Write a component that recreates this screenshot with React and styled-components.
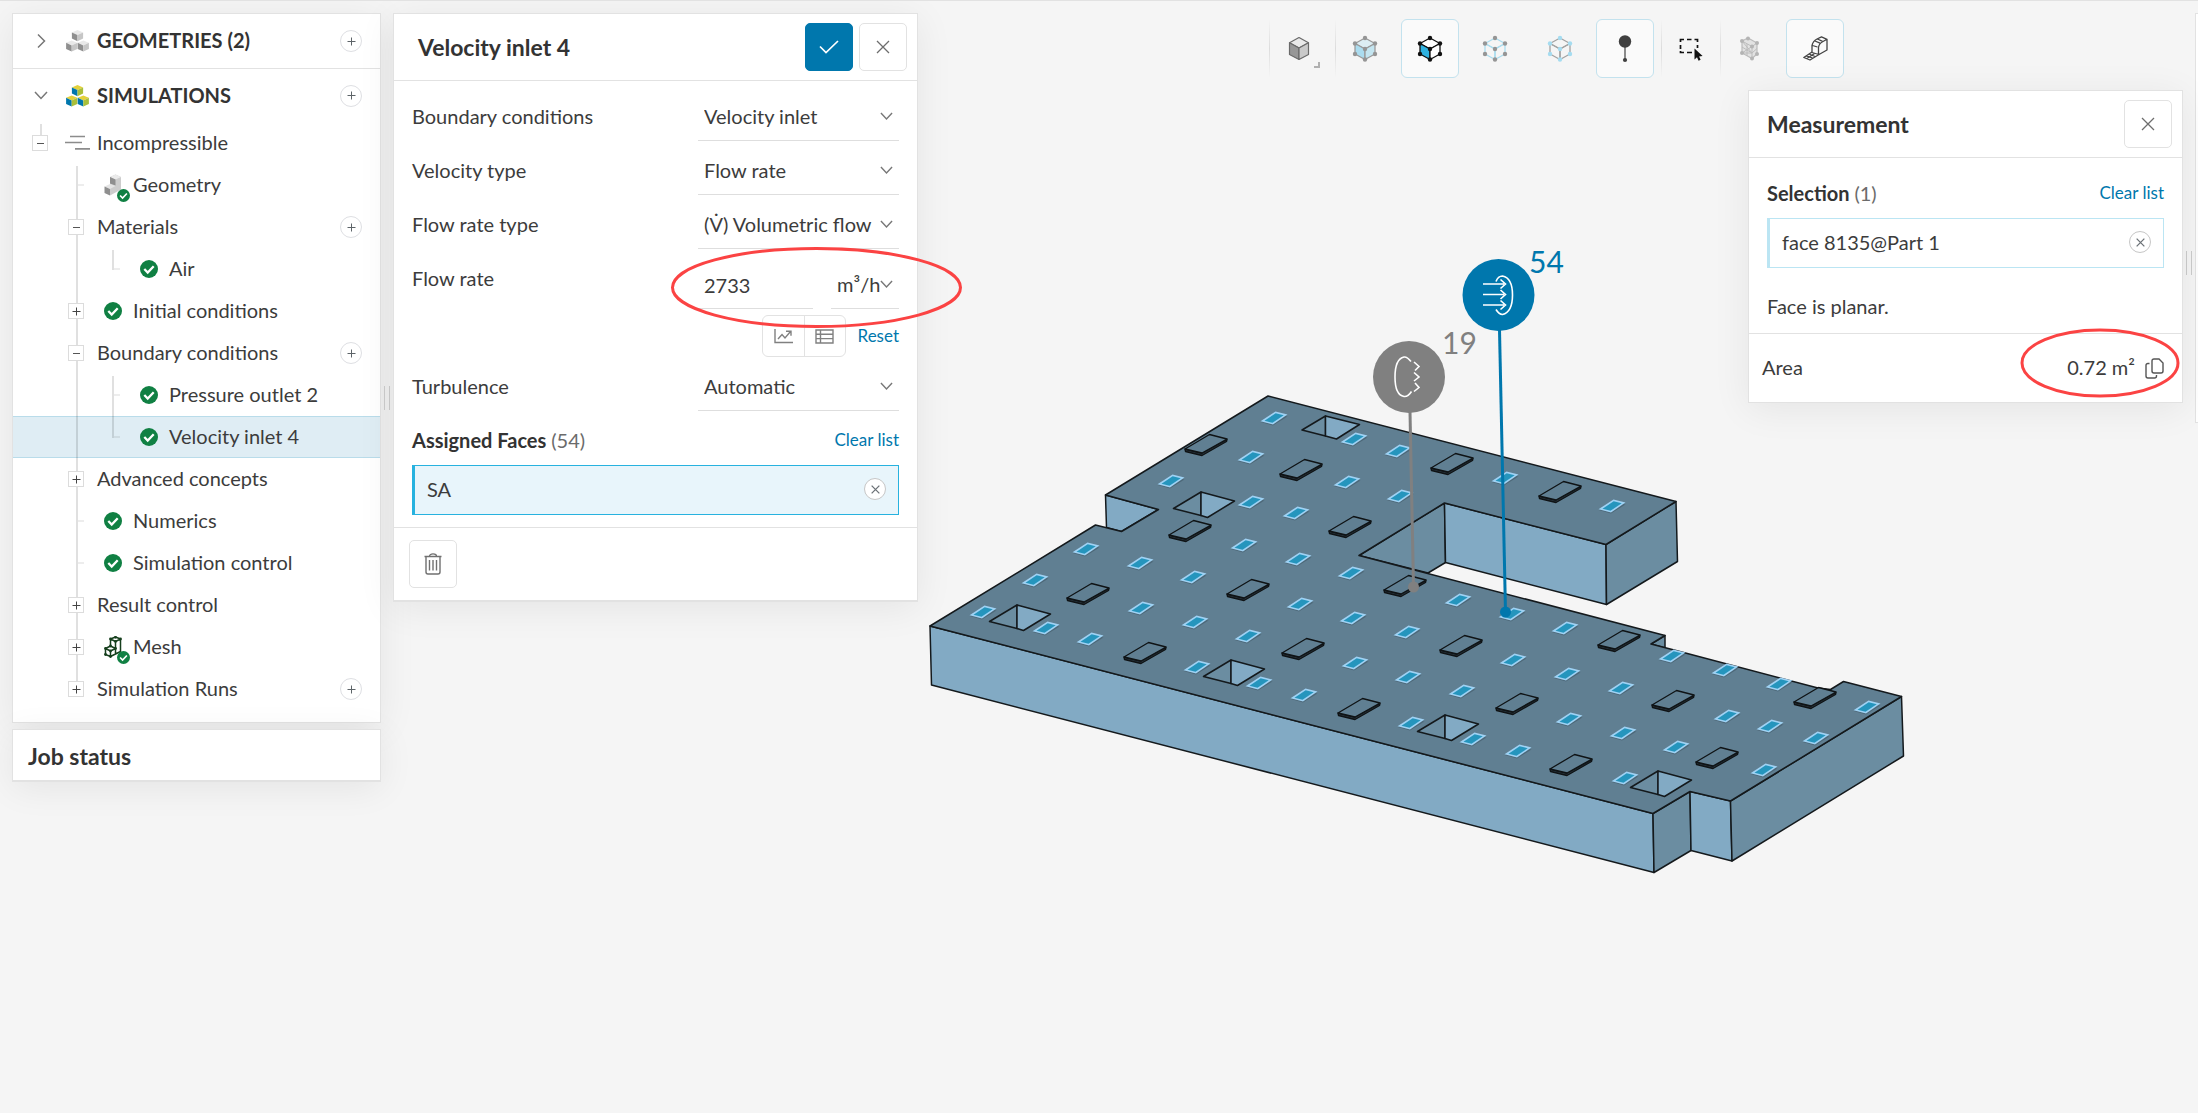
import React from "react";
import styled, { createGlobalStyle, css } from "styled-components";

const GlobalStyle = createGlobalStyle`
  *, *::before, *::after { box-sizing: border-box; }
  body {
    margin: 0;
    background: #f5f5f5;
    color: #3c3c3c;
    font-family: Lato, "Open Sans", sans-serif;
    font-size: 20px;
    line-height: 24px;
  }
  button, input, select { font: inherit; color: inherit; margin: 0; }
  button { cursor: pointer; padding: 0; }
  h1, h2, h3, p, ul { margin: 0; padding: 0; }
  ul { list-style: none; }
  svg { display: block; }
`;

/* ---------- layout ---------- */

const Workspace = styled.div`
  display: flex;
  min-height: 100vh;
  padding: 12px 0 0 12px;
  border-top: 1px solid #e2e2e2;
  overflow: hidden;
`;

const Sidebar = styled.nav`
  flex: none;
  width: 369px;
  display: flex;
  flex-direction: column;
  gap: 6px;
`;

const Panel = styled.section`
  background: #fff;
  border: 1px solid #e2e2e2;
  box-shadow: 0 6px 36px rgba(0, 0, 0, 0.07);
`;

const TreePanel = styled(Panel)`
  padding-bottom: 12px;
`;

const JobPanel = styled(Panel)`
  padding: 14px 15px 12px;
  border-bottom-width: 2px;
`;

const SettingsPanel = styled(Panel)`
  position: relative;
  z-index: 2;
  flex: none;
  align-self: flex-start;
  width: 525px;
  border-bottom-width: 2px;
`;

const Viewer = styled.main`
  position: relative;
  flex: 1;
  min-width: 0;
  display: flex;
  flex-direction: column;
`;

const MeasureDock = styled.div`
  position: relative;
  display: flex;
  justify-content: flex-end;
  margin-top: 12px;
`;

const MeasurePanel = styled(Panel)`
  width: 435px;
`;

const EdgePanel = styled.div`
  flex: none;
  width: 3px;
  height: 410px;
  background: #fff;
  border: 1px solid #e2e2e2;
  border-right: 0;
`;

const Grip = styled.div`
  flex: none;
  width: 12px;
  display: flex;
  justify-content: center;
  padding-top: ${(p) => p.$top}px;
  &::before {
    content: "";
    width: 6px;
    height: 24px;
    border: solid #cbcbcb;
    border-width: 0 1px;
  }
`;

/* ---------- text ---------- */

const Title = styled.h2`
  font-size: 23px;
  line-height: 28px;
  font-weight: 700;
  color: #333;
`;

const JobTitle = styled(Title)`
  line-height: 24px;
`;

const TextLink = styled.a`
  font-size: 17px;
  color: #0077ad;
  text-decoration: none;
`;

/* ---------- tree ---------- */

const TreeHead = styled.div`
  display: flex;
  align-items: center;
  height: ${(p) => (p.$divided ? 55 : 53)}px;
  padding: 0 18px 0 10px;
  border-bottom: ${(p) => (p.$divided ? "1px solid #e2e2e2" : "0")};
`;

const TreeRow = styled.li`
  display: flex;
  align-items: center;
  height: 42px;
  padding: 0 18px 0 10px;
  ${(p) =>
    p.$selected &&
    css`
      background: #dfedf4;
      box-shadow: inset 0 1px #b9dcea, inset 0 -1px #b9dcea;
    `}
`;

const Label = styled.span`
  flex: 1;
  padding: 0 0 2px 2px;
  white-space: nowrap;
  font-weight: ${(p) => (p.$strong ? 700 : 400)};
  color: ${(p) => (p.$strong ? "#333" : "#3c3c3c")};
`;

const Slot = styled.span`
  flex: none;
  position: relative;
  width: 36px;
  height: 100%;
  display: flex;
  align-items: center;
  justify-content: center;
`;

const lineSpan = {
  all: "top: 0; bottom: 0;",
  first: "top: 2px; bottom: 0;",
  upper: "top: 0; height: 22px;",
  stub: "top: 2px; height: 20px;",
};

const Guide = styled(Slot)`
  ${(p) =>
    p.$line &&
    css`
      &::before {
        content: "";
        position: absolute;
        left: 17px;
        width: 2px;
        background: rgba(0, 0, 0, 0.12);
        ${lineSpan[p.$line]}
      }
    `}
  ${(p) =>
    p.$tick &&
    css`
      &::after {
        content: "";
        position: absolute;
        left: 19px;
        top: 20px;
        width: 6px;
        height: 2px;
        background: rgba(0, 0, 0, 0.07);
      }
    `}
`;

const Toggle = styled.button`
  position: relative;
  margin-right: 2px;
  display: grid;
  place-items: center;
  width: 16px;
  height: 16px;
  background: #fff;
  border: 1px solid #dcdcdc;
`;

const Caret = styled.button`
  display: grid;
  place-items: center;
  width: 20px;
  height: 20px;
  background: none;
  border: 0;
`;

const RoundButton = styled.button`
  flex: none;
  display: grid;
  place-items: center;
  width: 22px;
  height: 22px;
  border: 1px solid ${(p) => p.$edge || "#dedfe3"};
  border-radius: 50%;
  background: #fff;
`;

const Badged = styled.span`
  position: relative;
  svg + svg {
    position: absolute;
    left: 13px;
    top: 15px;
  }
`;

/* ---------- forms ---------- */

const PanelHead = styled.header`
  display: flex;
  align-items: center;
  gap: 6px;
  height: 67px;
  padding: 0 10px 0 ${(p) => p.$indent}px;
  border-bottom: 1px solid #e2e2e2;
  ${Title} { flex: 1; }
`;

const SquareButton = styled.button`
  display: grid;
  place-items: center;
  width: 48px;
  height: 48px;
  border: 1px solid ${(p) => (p.$primary ? "#0077ad" : "#e2e2e2")};
  border-radius: 5px;
  background: ${(p) => (p.$primary ? "#0077ad" : "#fff")};
`;

const FormBody = styled.div`
  padding: 9px 18px 12px;
  border-bottom: 1px solid #e2e2e2;
`;

const Field = styled.div`
  position: relative;
  display: flex;
  justify-content: space-between;
  min-height: 54px;
  padding: 3px 0;
`;

const FieldLabel = styled.label`
  line-height: 46px;
`;

const Picker = styled.span`
  display: grid;
  align-items: center;
  width: ${(p) => p.$width}px;
  border-bottom: 1px solid #dedede;
  height: 48px;
  select, svg { grid-area: 1 / 1; }
  select {
    appearance: none;
    width: 100%;
    height: 46px;
    padding: 0 0 2px 6px;
    border: 0;
    outline: 0;
    background: transparent;
  }
  svg {
    justify-self: end;
    margin-right: 6px;
    pointer-events: none;
  }
`;

const ValueArea = styled.div`
  width: 201px;
  padding-top: 6px;
`;

const ValueLine = styled.div`
  display: flex;
  justify-content: space-between;
`;

const ValueInput = styled.input`
  width: 115px;
  height: 48px;
  padding: 0 6px;
  border: 0;
  border-bottom: 1px solid #dedede;
  border-radius: 0;
  outline: 0;
  background: transparent;
`;

const ValueTools = styled.div`
  display: flex;
  justify-content: flex-end;
  align-items: center;
  gap: 12px;
  margin-top: 6px;
`;

const SplitGroup = styled.div`
  display: flex;
  border: 1px solid #e2e2e2;
  border-radius: 6px;
  button {
    display: grid;
    place-items: center;
    width: 41px;
    height: 40px;
    border: 0;
    background: none;
  }
  button + button { border-left: 1px solid #e2e2e2; }
`;

const ListHead = styled.div`
  display: flex;
  align-items: center;
  justify-content: space-between;
  height: ${(p) => p.$height}px;
  h3 { font-size: 20px; line-height: 24px; font-weight: 700; color: #333; }
  h3 span { font-weight: 400; color: #6b6b6b; }
`;

const Chip = styled.div`
  display: flex;
  align-items: center;
  justify-content: space-between;
  height: 50px;
  padding: 0 12px 2px;
  border: 1px solid ${(p) => (p.$active ? "#27b2df" : "#bbe5f3")};
  border-left-width: 3px;
  background: ${(p) => (p.$active ? "#e8f5fb" : "#fff")};
`;

const PanelFoot = styled.footer`
  padding: 12px 15px;
`;

const MeasureBody = styled.div`
  padding: 10px 18px 15px;
  border-bottom: 1px solid #e2e2e2;
  p { margin-top: 26px; }
`;

const AreaRow = styled.div`
  position: relative;
  display: flex;
  align-items: center;
  height: 68px;
  padding: 0 18px 0 13px;
  dt { flex: 1; padding-bottom: 2px; }
  dd { margin: 0 10px 0 0; padding-bottom: 2px; }
  button { border: 0; background: none; }
`;

const AreaList = styled.dl`
  margin: 0;
`;

const Mark = styled.svg`
  position: absolute;
  z-index: 3;
  left: ${(p) => p.$left}px;
  top: ${(p) => p.$top}px;
  pointer-events: none;
  overflow: visible;
`;

/* ---------- toolbar ---------- */

const Toolbar = styled.div`
  position: relative;
  display: flex;
  justify-content: center;
  gap: 7px;
  padding: 6px 0 0 12px;
`;

const ToolGroup = styled.div`
  display: flex;
  gap: 7px;
`;

const ToolSet = styled.div`
  display: flex;
`;

const Divider = styled.i`
  width: 1px;
  margin-right: -7px;
  background: linear-gradient(rgba(0, 0, 0, 0), rgba(0, 0, 0, 0.1), rgba(0, 0, 0, 0));
`;

const Tool = styled.button`
  position: relative;
  display: grid;
  place-items: center;
  width: 58px;
  height: 59px;
  border: 1px solid ${(p) => (p.$on ? "#c3e2ee" : "transparent")};
  border-radius: 6px;
  background: ${(p) => (p.$on ? "#fafafa" : "transparent")};
  ${(p) =>
    p.$menu &&
    css`
      &::after {
        content: "";
        position: absolute;
        right: 7px;
        bottom: 9px;
        width: 6px;
        height: 6px;
        border: solid #b0b0b0;
        border-width: 0 2px 2px 0;
      }
    `}
`;

/* ---------- icons ---------- */

const Plus = ({ size = 9, color = "#5d6468" }) => (
  <svg width={size} height={size} viewBox="0 0 9 9">
    <path d="M4.5 0.5v8M0.5 4.5h8" stroke={color} fill="none" />
  </svg>
);
const Minus = () => (
  <svg width="9" height="9" viewBox="0 0 9 9">
    <path d="M1 4.5h7" stroke="#555" fill="none" />
  </svg>
);
const Cross = ({ size = 14, weight = 1.3, color = "#6d6d6d" }) => (
  <svg width={size} height={size} viewBox="0 0 14 14">
    <path d="M1 1l12 12M13 1L1 13" stroke={color} strokeWidth={weight} fill="none" />
  </svg>
);
const Chevron = ({ width = 14 }) => (
  <svg width={width} height={(width * 9) / 14} viewBox="0 0 14 9" fill="none" stroke="#777" strokeWidth="1.5">
    <path d="M1 1l6 6.5L13 1" />
  </svg>
);
const ChevronRight = () => (
  <svg width="9" height="14" viewBox="0 0 9 14" fill="none" stroke="#777" strokeWidth="1.5">
    <path d="M1 0.5l6.5 6.5L1 13.5" />
  </svg>
);
const Tick = ({ size = 18 }) => (
  <svg width={size} height={size} viewBox="0 0 18 18">
    <circle cx="9" cy="9" r="9" fill="#108043" />
    <path d="M4.3 9l3.4 3.5 6-6.3" fill="none" stroke="#fff" strokeWidth="2.3" />
  </svg>
);

const Cube = ({ x, y, tones }) => (
  <g transform={`translate(${x} ${y})`}>
    <path d="M0 0l5.6 2.4L0 5l-5.6-2.6z" fill={tones[0]} />
    <path d="M-5.6 2.4L0 5v6.2l-5.6-2.6z" fill={tones[1]} />
    <path d="M5.6 2.4L0 5v6.2l5.6-2.6z" fill={tones[2]} />
  </g>
);
const Cubes = ({ tones }) => (
  <svg width="23" height="22" viewBox="0 0 23 22">
    <Cube x={11.5} y={0} tones={tones} />
    <Cube x={5.7} y={10.4} tones={tones} />
    <Cube x={17.3} y={10.4} tones={tones} />
  </svg>
);

const FlowLines = () => (
  <svg width="25" height="16" viewBox="0 0 25 16" stroke="#8c8c8c" strokeWidth="1.7">
    <path d="M5 1.5h15M0 7.5h17M10 13.8h15" />
  </svg>
);
const GeometryIcon = () => (
  <svg width="18" height="22" viewBox="0 0 18 22">
    <path d="M6 3l5.5-2.5L17 3v12.5L6 21.5 6 14z" fill="#cdcdcd" />
    <path d="M6 3l5.5-2.5L17 3l-5.5 2.6z" fill="#ebebeb" />
    <path d="M6 3l5.500 2.600v6L6 9.500z" fill="#8f8f8f" />
    <path d="M0.500 12.500L6 10l5.500 2L6 15z" fill="#e4e4e4" />
    <path d="M0.500 12.500L6 15v6.500L0.500 19z" fill="#8f8f8f" />
  </svg>
);
const MeshIcon = () => (
  <svg width="18" height="22" viewBox="0 0 18 22" fill="none" stroke="#163f1d" strokeWidth="1.5" strokeLinejoin="round">
    <path d="M6.500 3l5-2 5 2-5 2.500zM6.500 3v7M11.500 5.500v7M16.500 3v12.500L6.500 20.500M1.500 12.500l5-2.500 5 2.500-5 2.500zM1.500 12.500v6l5 2v-5.500M11.500 12.500V18" />
    <g fill="#163f1d" stroke="none">
      {[[6.5, 3], [11.5, 1.3], [16.5, 3], [11.5, 5.5], [1.5, 12.5], [6.5, 10], [11.5, 12.5], [6.5, 15], [1.5, 18.5], [6.5, 20.5]].map(
        ([x, y]) => <circle key={`${x}-${y}`} cx={x} cy={y} r="1.4" />
      )}
    </g>
  </svg>
);

const CheckMark = () => (
  <svg width="20" height="14" viewBox="0 0 20 14" fill="none" stroke="#fff" strokeWidth="1.7">
    <path d="M1 6.500l6 6L19 1" />
  </svg>
);
const TrashIcon = () => (
  <svg width="18" height="22" viewBox="0 0 18 22" fill="none" stroke="#707070" strokeWidth="1.4">
    <path d="M0.500 3.500h17M5.500 3.500c0-3.500 7-3.500 7 0M2 3.500v15.500q0 2 2 2h10q2 0 2-2V3.500M5.500 7v10.500M9 7v10.500M12.500 7v10.500" />
  </svg>
);
const TrendIcon = () => (
  <svg width="19" height="15" viewBox="0 0 19 15" fill="none" stroke="#808080" strokeWidth="1.400">
    <path d="M1 0v13.500h18M4 10l4-4.500 3 3.500 5.500-6.500M12 2.200h5v4.500" />
  </svg>
);
const TableIcon = () => (
  <svg width="19" height="15" viewBox="0 0 19 15" fill="none" stroke="#808080" strokeWidth="1.400">
    <path d="M1 1h17v13H1zM1 5.300h17M1 9.600h17M5.500 1v13" />
  </svg>
);
const CopyIcon = () => (
  <svg width="19" height="21" viewBox="0 0 19 21" fill="none" stroke="#555" strokeWidth="1.400">
    <path d="M7 3q0-2 2-2h5l4 4v8q0 2-2 2H9q-2 0-2-2zM4.500 5.500H3q-2 0-2 2V18q0 2 2 2h6.500q2 0 2-2v-1" />
  </svg>
);

const HEX = [[11, 2], [21, 7.500], [21, 18], [11, 23.500], [1, 18], [1, 7.500], [11, 13]];
const SelectCube = ({ edge, dot, top = "none", left = "none", right = "none" }) => (
  <svg width="26" height="28" viewBox="-2 -1 26 28">
    <g stroke={edge} strokeWidth="1.300" strokeLinejoin="round">
      <path d="M11 2l10 5.500-10 5.500L1 7.500z" fill={top} />
      <path d="M1 7.500L11 13v10.500L1 18z" fill={left} />
      <path d="M21 7.500L11 13v10.500L21 18z" fill={right} />
    </g>
    {HEX.map(([x, y]) => (
      <circle key={`${x}-${y}`} cx={x} cy={y} r="2.200" fill={dot} />
    ))}
  </svg>
);
const SolidCube = () => (
  <svg width="22" height="25" viewBox="0 0 22 25" stroke="#6a6a6a" strokeWidth="1.200" strokeLinejoin="round">
    <path d="M11 1.500l9.500 5.300L11 12 1.500 6.800z" fill="#e9e9e9" />
    <path d="M1.500 6.800L11 12v11.500l-9.500-5z" fill="#979797" />
    <path d="M20.500 6.800L11 12v11.500l9.500-5z" fill="#c9c9c9" />
  </svg>
);
const PinIcon = () => (
  <svg width="14" height="28" viewBox="0 0 14 28">
    <path d="M7 7v18" stroke="#707070" strokeWidth="1.600" />
    <circle cx="7" cy="6.500" r="6.200" fill="#3f3f3f" />
    <circle cx="7" cy="25" r="2.100" fill="#3f3f3f" />
  </svg>
);
const BoxSelectIcon = () => (
  <svg width="24" height="24" viewBox="0 0 24 24">
    <path d="M1.500 5V2.500H5M8 2.500h4.500M15.500 2.500h3V5M1.500 8v4M1.500 14v1.500H5M8 15.500h5M18.500 8v3" fill="none" stroke="#111" strokeWidth="1.700" />
    <path d="M15.500 11.500v11l2.500-2.300 1.600 3.500 2-.9-1.500-3.400 3.500-.4z" fill="#111" />
  </svg>
);
const MeshPickIcon = () => (
  <svg width="20" height="26" viewBox="0 0 20 26">
    <path d="M2 5l6-3 9 5v11l-5 4.500L2 17z" fill="#e2e2e2" stroke="#bcbcbc" strokeWidth="1.200" />
    <path d="M2 5l10 5.500L17 7M12 10.500v12M2 11l10 6 5-4.500M2 5l10 12L2 17M12 10.500L2 17M7 8v12" fill="none" stroke="#bcbcbc" />
    {[[2, 5], [8, 2.500], [17, 7], [12, 10.500], [2, 17], [17, 18], [12, 22.500]].map(([x, y]) => (
      <circle key={`${x}-${y}`} cx={x} cy={y} r="2" fill="#b4b4b4" />
    ))}
  </svg>
);
const TapeIcon = () => (
  <svg width="25" height="25" viewBox="0 0 25 25" fill="none" stroke="#444" strokeWidth="1.300" strokeLinejoin="round">
    <path d="M9 16.500V9.500Q10 5 14 3L18.500 0.800 24 3.300V14L16 18.500 9 16.500M15.500 18V11.500Q16 7.500 20 5.500L24 3.300M9.500 9.500l5 1.500M12 5l5 2.200M14.500 3l5 2.300" />
    <path d="M9 16L0.800 21.500 7 24 16 18.500M3.500 19.800l6 2.200M6 18l6 2.500M4 22.500L11.500 17.500" />
  </svg>
);

/* ---------- tree data ---------- */

const GREY = ["#e9e9e9", "#8f8f8f", "#c6c6c6"];
const BRAND = ["#e3d13c", "#0077ad", "#a9bf3a"];

const withBadge = (icon) => (
  <Badged>
    {icon}
    <Tick size={13} />
  </Badged>
);

const ROWS = [
  { label: "Incompressible", guides: [{ line: "stub", open: true }], icon: <FlowLines /> },
  { label: "Geometry", guides: [{}, { line: "first", tick: true }], icon: withBadge(<GeometryIcon />) },
  { label: "Materials", guides: [{}, { line: "all", open: true }], add: true },
  { label: "Air", guides: [{}, { line: "all" }, { line: "stub", tick: true }], icon: <Tick /> },
  { label: "Initial conditions", guides: [{}, { line: "all", open: false }], icon: <Tick /> },
  { label: "Boundary conditions", guides: [{}, { line: "all", open: true }], add: true },
  { label: "Pressure outlet 2", guides: [{}, { line: "all" }, { line: "first", tick: true }], icon: <Tick /> },
  { label: "Velocity inlet 4", guides: [{}, { line: "all" }, { line: "upper", tick: true }], icon: <Tick />, selected: true },
  { label: "Advanced concepts", guides: [{}, { line: "all", open: false }] },
  { label: "Numerics", guides: [{}, { line: "all", tick: true }], icon: <Tick /> },
  { label: "Simulation control", guides: [{}, { line: "all", tick: true }], icon: <Tick /> },
  { label: "Result control", guides: [{}, { line: "all", open: false }] },
  { label: "Mesh", guides: [{}, { line: "all", open: false }], icon: withBadge(<MeshIcon />) },
  { label: "Simulation Runs", guides: [{}, { line: "upper", open: false }], add: true },
];

const TreeItem = ({ label, guides, icon, add, selected }) => (
  <TreeRow $selected={selected}>
    {guides.map((g, i) => (
      <Guide key={i} $line={g.line} $tick={g.tick}>
        {g.open !== undefined && (
          <Toggle aria-label={`${g.open ? "Collapse" : "Expand"} ${label}`}>
            {g.open ? <Minus /> : <Plus color="#444" />}
          </Toggle>
        )}
      </Guide>
    ))}
    {icon && <Slot>{icon}</Slot>}
    <Label>{label}</Label>
    {add && (
      <RoundButton aria-label={`Add to ${label}`}>
        <Plus />
      </RoundButton>
    )}
  </TreeRow>
);

/* ---------- model ---------- */

const VENTS = [
  [1274, 418], [1354, 439], [1398, 451], [1251, 457], [1347, 482], [1171, 481], [1251, 502], [1296, 513],
  [1400, 496], [1086, 549], [1244, 545], [1298, 559], [1140, 563], [1193, 577], [1351, 573], [1035, 580],
  [983, 612], [1046, 628], [1090, 639], [1141, 608], [1195, 622], [1300, 604], [1353, 618], [1248, 636],
  [1197, 667], [1259, 683], [1304, 695], [1355, 663], [1407, 632], [1408, 677], [1505, 478], [1612, 506],
  [1458, 600], [1512, 614], [1565, 628], [1513, 660], [1567, 674], [1621, 688], [1462, 691], [1411, 723],
  [1473, 739], [1518, 751], [1569, 719], [1623, 733], [1676, 747], [1625, 778], [1727, 716], [1770, 726],
  [1816, 738], [1764, 770], [1867, 707], [1672, 656], [1725, 670], [1779, 684],
];

const OUTLETS = [
  [1206, 445], [1301, 470], [1190, 531], [1350, 527], [1088, 594], [1248, 590], [1145, 653], [1303, 649],
  [1359, 709], [1405, 586], [1452, 464], [1560, 492], [1619, 641], [1461, 646], [1517, 704], [1673, 701],
  [1571, 765], [1717, 758], [1815, 698],
];

const HOLES = [[1201, 492], [1017, 605], [1231, 660], [1445, 715], [1658, 771]];

const TOP = "#607f92";
const LIGHT = "#82aac4";
const DARK = "#6b8da1";

const SceneSvg = styled.svg`
  position: absolute;
  left: 0;
  top: -13px;
  width: 100%;
  height: 100vh;
`;

const PinCount = styled.text`
  font-family: Lato, sans-serif;
  font-size: 30px;
`;

const Scene = () => (
  <SceneSvg viewBox="918 0 1265 1113" role="img" aria-label="Room model with 54 inlet and 19 outlet faces">
    <g stroke="#14191c" strokeWidth="1.500" strokeLinejoin="round">
      <path fill={LIGHT} d="M930 626L1653 813.500 1654 872.500 931.500 685z" />
      <path fill={DARK} d="M1653 813.500L1690 791.500 1691 850.500 1654 872.500z" />
      <path fill={LIGHT} d="M1690 791.500L1730.500 801 1732 861 1691 850.500z" />
      <path fill={DARK} d="M1730.500 801L1901.500 696.500 1903.500 756 1732 861z" />
      <path fill={DARK} d="M1665 635.500V648L1651 644z" />
      <path fill={LIGHT} d="M1105.500 495L1158.500 509.500 1121.500 531.500 1106.500 527.500z" />
      <path fill={DARK} d="M1444.500 503L1445.500 562.500 1428 573 1359 555.500z" />
      <path fill={LIGHT} d="M1444.500 503L1606 544.500 1606.500 604.500 1445.500 562.500z" />
      <path fill={DARK} d="M1606 544.500L1676 501.500 1677.500 561.500 1606.500 604.500z" />
      <path
        fill={TOP}
        d="M1268 396L1676 501.500 1606 544.500 1444.500 503 1359 555.500 1665 635.500 1651 644 1676 650.500 1818 688 1830.500 689.500 1843.500 681.500 1901.500 696.500 1730.500 801 1690 791.500 1653 813.500 930 626 1095.500 525 1121.500 531.500 1158.500 509.500 1105.500 495z"
      />
      <g>
        <path fill={DARK} d="M1325.500 416L1302 430 1325.500 436z" />
        <path fill={LIGHT} d="M1325.500 416L1359.500 424.500 1336.500 439 1325.500 436z" />
      </g>
      {HOLES.map(([x, y]) => (
        <g key={x} transform={`translate(${x} ${y})`}>
          <path fill={DARK} d="M0 0L-27.500 16.500 0 23.500z" />
          <path fill={LIGHT} d="M0 0L33.500 9 6.500 25.500 0 23.500z" />
        </g>
      ))}
    </g>
    {OUTLETS.map(([x, y]) => (
      <g key={`${x}-${y}`} transform={`translate(${x} ${y})`} stroke="#0f1315" strokeWidth="1.300" strokeLinejoin="round">
        <path fill="#26323a" d="M-21 4L-20.500 6.500 -4 10.500 20.500 -3.500 21 -5.500 -4 8z" />
        <path fill={TOP} d="M-21 4L3.500 -10.500 21 -6 -4 8z" />
      </g>
    ))}
    {VENTS.map(([x, y]) => (
      <g key={`${x}-${y}`} transform={`translate(${x} ${y})`}>
        <path fill="#4d6878" d="M-13.500 4L-1 7.500 13.500 -1.500 1 -4z" />
        <path fill="#9fd2f4" d="M-13.500 3.200L1.500 -6.600 13.500 -3.400 -1 6.500z" />
        <path fill="#2595bd" d="M-9.500 2.700L1.700 -4.800 9.700 -2.700 -1.500 4.800z" />
      </g>
    ))}
    <g fill="#808080" stroke="none">
      <path d="M1410 412L1413.500 587" stroke="#808080" strokeWidth="3" />
      <circle cx="1413.500" cy="587" r="5.500" />
      <circle cx="1409" cy="377" r="36" />
      <PinCount x="1442" y="354">19</PinCount>
    </g>
    <path
      d="M1411 361.500Q1407 356.500 1404 357Q1395 359 1395 377T1404 396.500Q1408 397 1411.500 391.500M1414 362l5 4.500-4 4M1414 372.500l5 4.500-5 4M1415 383l4 4.500-5 4"
      fill="none"
      stroke="#fff"
      strokeWidth="1.600"
    />
    <g fill="#0077ad" stroke="none">
      <path d="M1499.500 330L1505.500 612" stroke="#0077ad" strokeWidth="3" />
      <circle cx="1505.500" cy="612" r="5.500" />
      <circle cx="1498.500" cy="295" r="36" />
      <PinCount x="1529" y="273">54</PinCount>
    </g>
    <path
      d="M1496 281.500Q1498 276 1502.500 276Q1512.500 278 1512.500 295T1502.500 314.500Q1499 314.500 1496 309.500M1483 284h21M1500.500 279.500l5 4.500-5 4.500M1483 294.500h21M1500.500 290l5 4.500-5 4.500M1483 305h21M1500.500 300.500l5 4.500-5 4.500"
      fill="none"
      stroke="#fff"
      strokeWidth="1.600"
    />
  </SceneSvg>
);

/* ---------- panels ---------- */

const SelectField = ({ id, label, value }) => (
  <Field>
    <FieldLabel htmlFor={id}>{label}</FieldLabel>
    <Picker $width={201}>
      <select id={id} defaultValue={value}>
        <option>{value}</option>
      </select>
      <Chevron width={13} />
    </Picker>
  </Field>
);

const Settings = () => (
  <SettingsPanel>
    <PanelHead $indent={24}>
      <Title>Velocity inlet 4</Title>
      <SquareButton $primary aria-label="Apply">
        <CheckMark />
      </SquareButton>
      <SquareButton aria-label="Close settings">
        <Cross />
      </SquareButton>
    </PanelHead>
    <FormBody>
      <SelectField id="bc" label="Boundary conditions" value="Velocity inlet" />
      <SelectField id="velocity-type" label="Velocity type" value="Flow rate" />
      <SelectField id="rate-type" label="Flow rate type" value="(V̇) Volumetric flow" />
      <Field>
        <FieldLabel htmlFor="flow-rate">Flow rate</FieldLabel>
        <ValueArea>
          <ValueLine>
            <ValueInput id="flow-rate" defaultValue="2733" />
            <Picker $width={68}>
              <select aria-label="Flow rate unit" defaultValue="m³/h">
                <option>m³/h</option>
              </select>
              <Chevron width={13} />
            </Picker>
          </ValueLine>
          <ValueTools>
            <SplitGroup>
              <button aria-label="Formula">
                <TrendIcon />
              </button>
              <button aria-label="Table">
                <TableIcon />
              </button>
            </SplitGroup>
            <TextLink href="#reset">Reset</TextLink>
          </ValueTools>
        </ValueArea>
        <Mark $left={259} $top={-5} width="291" height="81">
          <ellipse cx="145.500" cy="40.500" rx="144" ry="39" fill="none" stroke="#fb4343" strokeWidth="3" />
        </Mark>
      </Field>
      <SelectField id="turbulence" label="Turbulence" value="Automatic" />
      <ListHead $height={51}>
        <h3>
          Assigned Faces <span>(54)</span>
        </h3>
        <TextLink href="#clear-faces">Clear list</TextLink>
      </ListHead>
      <Chip $active>
        SA
        <RoundButton $edge="#c6c6c6" aria-label="Remove SA">
          <Cross size={9} weight={2} color="#6b7176" />
        </RoundButton>
      </Chip>
    </FormBody>
    <PanelFoot>
      <SquareButton aria-label="Delete">
        <TrashIcon />
      </SquareButton>
    </PanelFoot>
  </SettingsPanel>
);

const Measurement = () => (
  <MeasurePanel>
    <PanelHead $indent={18}>
      <Title>Measurement</Title>
      <SquareButton aria-label="Close measurement">
        <Cross />
      </SquareButton>
    </PanelHead>
    <MeasureBody>
      <ListHead $height={50}>
        <h3>
          Selection <span>(1)</span>
        </h3>
        <TextLink href="#clear-selection">Clear list</TextLink>
      </ListHead>
      <Chip>
        face 8135@Part 1
        <RoundButton $edge="#c6c6c6" aria-label="Remove face">
          <Cross size={9} weight={2} color="#6b7176" />
        </RoundButton>
      </Chip>
      <p>Face is planar.</p>
    </MeasureBody>
    <AreaList>
      <AreaRow>
        <dt>Area</dt>
        <dd>0.72 m²</dd>
        <button aria-label="Copy area">
          <CopyIcon />
        </button>
        <Mark $left={271} $top={-6} width="160" height="70">
          <ellipse cx="80" cy="35" rx="78" ry="33" fill="none" stroke="#fb4343" strokeWidth="3" />
        </Mark>
      </AreaRow>
    </AreaList>
  </MeasurePanel>
);

export default function App() {
  return (
    <>
      <GlobalStyle />
      <Workspace>
        <Sidebar>
          <TreePanel>
            <TreeHead $divided>
              <Slot>
                <Caret aria-label="Expand geometries">
                  <ChevronRight />
                </Caret>
              </Slot>
              <Slot>
                <Cubes tones={GREY} />
              </Slot>
              <Label $strong>GEOMETRIES (2)</Label>
              <RoundButton aria-label="Add geometry">
                <Plus />
              </RoundButton>
            </TreeHead>
            <TreeHead>
              <Slot>
                <Caret aria-label="Collapse simulations">
                  <Chevron />
                </Caret>
              </Slot>
              <Slot>
                <Cubes tones={BRAND} />
              </Slot>
              <Label $strong>SIMULATIONS</Label>
              <RoundButton aria-label="Add simulation">
                <Plus />
              </RoundButton>
            </TreeHead>
            <ul>
              {ROWS.map((row) => (
                <TreeItem key={row.label} {...row} />
              ))}
            </ul>
          </TreePanel>
          <JobPanel>
            <JobTitle>Job status</JobTitle>
          </JobPanel>
        </Sidebar>
        <Grip $top={373} />
        <Settings />
        <Viewer>
          <Scene />
          <Toolbar>
            <ToolGroup>
              <Divider />
              <Tool $menu aria-label="Render mode">
                <SolidCube />
              </Tool>
            </ToolGroup>
            <ToolGroup>
              <Divider />
              <Tool aria-label="Select volumes">
                <SelectCube edge="#9a9a9a" dot="#959595" top="#dcedf3" left="#abdcef" right="#c4e5f0" />
              </Tool>
              <Tool $on aria-label="Select faces">
                <SelectCube edge="#111" dot="#111" top="#fff" left="#2fb2e0" right="#fff" />
              </Tool>
              <Tool aria-label="Select edges">
                <SelectCube edge="#a9dcee" dot="#959595" />
              </Tool>
              <Tool aria-label="Select vertices">
                <SelectCube edge="#a3a3a3" dot="#a5dcf0" />
              </Tool>
              <Tool $on aria-label="Show pins">
                <PinIcon />
              </Tool>
            </ToolGroup>
            <ToolSet>
              <ToolGroup>
                <Divider />
                <Tool aria-label="Box select">
                  <BoxSelectIcon />
                </Tool>
              </ToolGroup>
              <ToolGroup>
                <Divider />
                <Tool aria-label="Pick mesh">
                  <MeshPickIcon />
                </Tool>
                <Tool $on aria-label="Measure">
                  <TapeIcon />
                </Tool>
              </ToolGroup>
            </ToolSet>
          </Toolbar>
          <MeasureDock>
            <Measurement />
          </MeasureDock>
        </Viewer>
        <Grip $top={238} />
        <EdgePanel />
      </Workspace>
    </>
  );
}
